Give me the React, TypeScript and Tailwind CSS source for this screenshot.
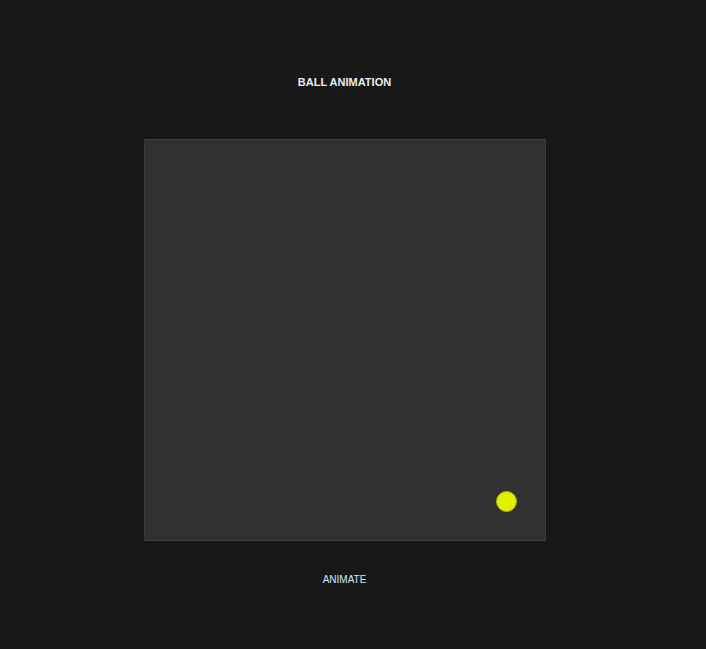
import React from 'react'

function App() {
  return (
    <div className="min-h-screen w-full bg-[#181818]" style={{ fontFamily: '"Liberation Sans", Arial, sans-serif' }}>
      <div className="w-[689px] flex flex-col items-center pt-[76px] pb-[60px]">
        <h1 className="text-[11px] leading-[13px] font-bold text-[#ececec]">BALL ANIMATION</h1>
        <div className="mt-[50px] w-[402px] h-[402px] bg-[#313131] border border-[#3a3a3a] flex flex-col">
          <div className="flex-1" />
          <div className="flex justify-end pr-[28px] pb-[28px]">
            <div className="w-[21px] h-[21px] rounded-full bg-[#e1f000] border border-[#a8b200]" />
          </div>
        </div>
        <button className="mt-[33px] text-[10px] leading-[12px] text-[#cde9ff] bg-transparent">ANIMATE</button>
      </div>
    </div>
  )
}

export default App
